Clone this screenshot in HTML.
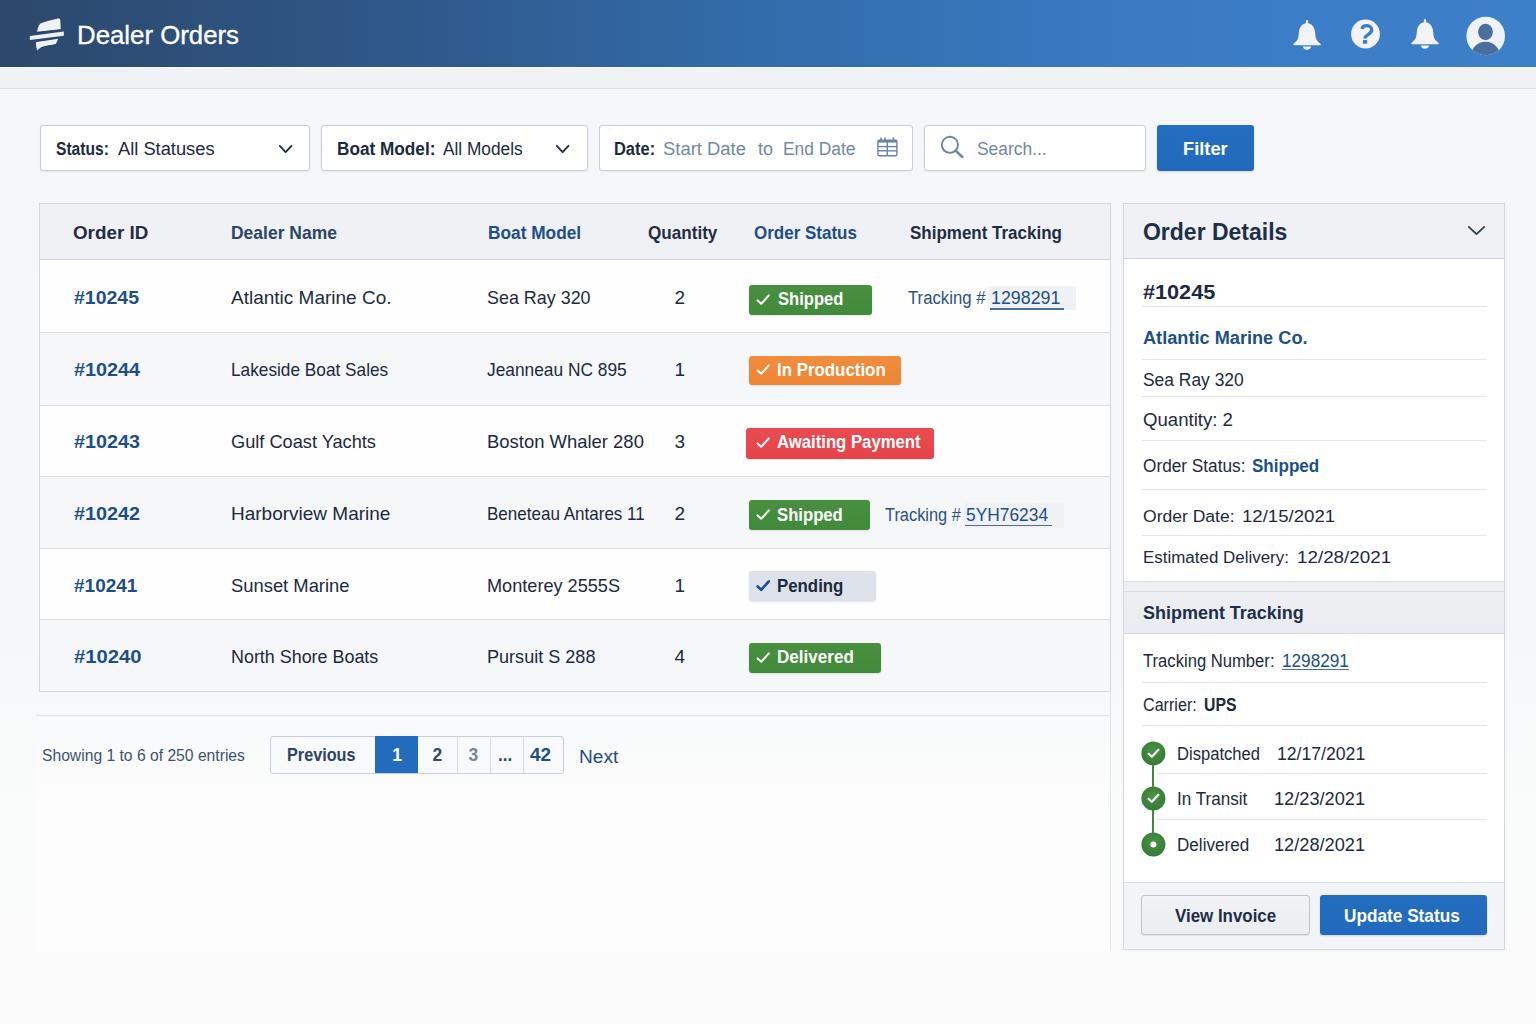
<!DOCTYPE html>
<html><head><meta charset="utf-8">
<style>
*{box-sizing:border-box;margin:0;padding:0}
html,body{width:1536px;height:1024px;overflow:hidden}
body{font-family:"Liberation Sans",sans-serif;background:linear-gradient(180deg,#f5f6f8 0%,#f6f7f8 62%,#fafbfb 80%,#fbfbfc 100%);position:relative}
.abs{position:absolute}
.t{position:absolute;white-space:nowrap}
.hdr{left:0;top:0;width:1536px;height:67px;background:linear-gradient(90deg,#2c486b 0%,#2f5788 25%,#326dab 50%,#3a7bc4 75%,#3d80ca 100%)}
.band{left:0;top:67px;width:1536px;height:22px;background:linear-gradient(180deg,#f1f2f5,#eff1f3);border-top:1px solid #fbfcfd;border-bottom:1px solid #d9dce2}
.box{background:#fff;border:1px solid #c6cdd8;border-radius:3px;height:46px;top:124.5px;box-shadow:0 1px 2px rgba(30,50,80,.06)}
.tbl{left:39px;top:203px;width:1072px;height:489px;border:1px solid #d3d8df;background:#fff}
.panel{left:1123px;top:203px;width:382px;height:747px;border:1px solid #d3d8df;background:#fff;box-shadow:0 1px 3px rgba(30,50,80,.05)}
</style></head><body>
<div class="abs hdr"></div>
<div class="abs band"></div>
<svg class="abs" style="left:24px;top:12px" width="50" height="44" viewBox="24 12 50 44">
<g fill="#eef1f6" stroke="#1a3559" stroke-width="0.8" stroke-linejoin="round">
<path d="M36.5 32.3 C37.5 27 38.5 24 41 22.8 C46 20.6 53 19.5 57.6 18.1 C59.6 17.6 60.7 18.6 60.8 20.2 L61.2 29.6 Z"/>
<path stroke="none" d="M29.8 36 L63.8 31.6 L63.8 35.8 L29.8 40 Z"/>
<path d="M35.6 41.7 L58.9 38.2 C57.8 41 56.8 43.6 55.4 44.6 C50 45.8 44 46.2 41.2 47.7 C39.5 48.8 38.3 50 37.3 50.8 C36 49 35.4 46.4 35.6 41.7 Z"/>
</g></svg>
<div class="t" style="left:77.00px;top:21.60px;font-size:26px;line-height:26px;font-weight:normal;color:#ffffff;transform:scaleX(0.9920);transform-origin:0 0;-webkit-text-stroke:0.35px #fff;">Dealer Orders</div>
<svg class="abs" style="left:1291px;top:19.5px" width="32" height="34" viewBox="-16 0 32 34">
<path fill="#f1f3f7" d="M-1.1 0.5 Q0 -0.3 1.1 0.5 L1.1 3.2 C6 4.2 7.7 8 8.2 13 C8.6 18 9 20.5 13.2 23.4 C14.3 24.2 14 25.3 12.8 25.3 L-12.8 25.3 C-14 25.3 -14.3 24.2 -13.2 23.4 C-9 20.5 -8.6 18 -8.2 13 C-7.7 8 -6 4.2 -1.1 3.2 Z"/>
<path fill="#f1f3f7" d="M-4.2 26.5 L4.2 26.5 C3.6 28.6 2 29.8 0 29.8 C-2 29.8 -3.6 28.6 -4.2 26.5 Z"/>
</svg>
<svg class="abs" style="left:1408.8px;top:18.5px" width="32" height="34" viewBox="-16 0 32 34">
<path fill="#f1f3f7" d="M-1.1 0.5 Q0 -0.3 1.1 0.5 L1.1 3.2 C6 4.2 7.7 8 8.2 13 C8.6 18 9 20.5 13.2 23.4 C14.3 24.2 14 25.3 12.8 25.3 L-12.8 25.3 C-14 25.3 -14.3 24.2 -13.2 23.4 C-9 20.5 -8.6 18 -8.2 13 C-7.7 8 -6 4.2 -1.1 3.2 Z"/>
<path fill="#f1f3f7" d="M-4.2 26.5 L4.2 26.5 C3.6 28.6 2 29.8 0 29.8 C-2 29.8 -3.6 28.6 -4.2 26.5 Z"/>
</svg>
<svg class="abs" style="left:1350px;top:19px" width="31" height="31" viewBox="0 0 31 31">
<circle cx="15.5" cy="15" r="14.4" fill="#f1f3f7"/>
<path d="M12 10 C12.3 7.4 14.4 6.6 16.8 6.6 C19.7 6.6 21.7 8.5 21.7 11.1 C21.7 13.7 19.6 14.8 17.4 16.1 C15.7 17.1 14.9 17.9 14.9 19.4" fill="none" stroke="#3b7cc8" stroke-width="3.3"/>
<rect x="12.9" y="21.1" width="4.3" height="3.6" fill="#3b7cc8"/>
</svg>
<svg class="abs" style="left:1466px;top:16px" width="40" height="40" viewBox="0 0 40 40">
<defs><clipPath id="avc"><circle cx="19.7" cy="20" r="19.3"/></clipPath></defs>
<circle cx="19.7" cy="20" r="19.3" fill="#eef1f6"/>
<g clip-path="url(#avc)" fill="#4a6f9e">
<ellipse cx="19.5" cy="15.9" rx="7.4" ry="8.1"/>
<ellipse cx="19.5" cy="40" rx="14.6" ry="14.2"/>
</g>
</svg>
<div class="abs box" style="left:40px;width:270px"></div>
<div class="t" style="left:55.50px;top:139.70px;font-size:18px;line-height:18px;font-weight:bold;color:#1b2a41;transform:scaleX(0.8672);transform-origin:0 0;">Status:</div>
<div class="t" style="left:117.50px;top:139.70px;font-size:18px;line-height:18px;font-weight:normal;color:#1b2a41;transform:scaleX(1.0158);transform-origin:0 0;">All Statuses</div>
<svg class="abs" style="left:277px;top:143px" width="17.30000000000001" height="12" viewBox="277 143 17.30000000000001 12"><path d="M279.8 145.8 L285.65 152.2 L291.5 145.8" fill="none" stroke="#1e2c45" stroke-width="1.8" stroke-linecap="round" stroke-linejoin="round"/></svg>
<div class="abs box" style="left:321px;width:267px"></div>
<div class="t" style="left:336.80px;top:139.70px;font-size:18px;line-height:18px;font-weight:bold;color:#1b2a41;transform:scaleX(0.9553);transform-origin:0 0;">Boat Model:</div>
<div class="t" style="left:443.00px;top:139.70px;font-size:18px;line-height:18px;font-weight:normal;color:#1b2a41;transform:scaleX(0.9590);transform-origin:0 0;">All Models</div>
<svg class="abs" style="left:554px;top:143px" width="17.299999999999955" height="12" viewBox="554 143 17.299999999999955 12"><path d="M556.8 145.8 L562.65 152.2 L568.5 145.8" fill="none" stroke="#1e2c45" stroke-width="1.8" stroke-linecap="round" stroke-linejoin="round"/></svg>
<div class="abs box" style="left:599px;width:314px"></div>
<div class="t" style="left:613.60px;top:139.70px;font-size:18px;line-height:18px;font-weight:bold;color:#1b2a41;transform:scaleX(0.9133);transform-origin:0 0;">Date:</div>
<div class="t" style="left:662.60px;top:139.70px;font-size:18px;line-height:18px;font-weight:normal;color:#7488a3;transform:scaleX(1.0235);transform-origin:0 0;">Start Date</div>
<div class="t" style="left:758.00px;top:139.70px;font-size:18px;line-height:18px;font-weight:normal;color:#7488a3;">to</div>
<div class="t" style="left:783.40px;top:139.70px;font-size:18px;line-height:18px;font-weight:normal;color:#7488a3;transform:scaleX(0.9667);transform-origin:0 0;">End Date</div>
<svg class="abs" style="left:870px;top:132px" width="36" height="30" viewBox="870 132 36 30">
<g fill="none" stroke="#6a84a6" stroke-width="1.4">
<rect x="877.9" y="140.2" width="19" height="15.6" rx="1.2"/>
<line x1="877.9" y1="146.6" x2="896.9" y2="146.6"/><line x1="877.9" y1="150.8" x2="896.9" y2="150.8"/>
<line x1="887.3" y1="142" x2="887.3" y2="155.8"/>
</g>
<rect x="877.9" y="140" width="19" height="2.6" fill="#6a84a6"/>
<g stroke="#6a84a6" stroke-width="1.6"><line x1="881" y1="137.6" x2="881" y2="140.5"/><line x1="885" y1="137.6" x2="885" y2="140.5"/><line x1="893.4" y1="137.6" x2="893.4" y2="140.5"/></g>
</svg>
<div class="abs box" style="left:924px;width:222px"></div>
<svg class="abs" style="left:934px;top:130px" width="36" height="34" viewBox="934 130 36 34">
<circle cx="949.9" cy="144.8" r="8.1" fill="none" stroke="#6f84a0" stroke-width="1.9"/>
<line x1="955.6" y1="150.6" x2="962.3" y2="156.9" stroke="#6f84a0" stroke-width="2.6" stroke-linecap="round"/>
</svg>
<div class="t" style="left:977.00px;top:139.70px;font-size:18px;line-height:18px;font-weight:normal;color:#7488a3;transform:scaleX(0.9667);transform-origin:0 0;">Search...</div>
<div class="abs" style="left:1157px;top:125px;width:97px;height:46px;background:linear-gradient(180deg,#236ec0,#2169bb);border-radius:3px;box-shadow:0 1px 2px rgba(0,0,0,.15)"></div>
<div class="t" style="left:1183.00px;top:140.00px;font-size:18px;line-height:18px;font-weight:bold;color:#ffffff;transform:scaleX(1.0159);transform-origin:0 0;">Filter</div>
<div class="abs" style="left:1110px;top:203px;width:1px;height:748px;background:#e3e6eb"></div>
<div class="abs tbl"></div>
<div class="abs" style="left:40px;top:204px;width:1070px;height:55px;background:linear-gradient(180deg,#f0f1f4,#eef0f3)"></div>
<div class="abs" style="left:40px;top:259px;width:1070px;height:1px;background:#cdd3dc"></div>
<div class="abs" style="left:40px;top:260px;width:1070px;height:72px;background:#fefefe"></div>
<div class="abs" style="left:40px;top:332px;width:1070px;height:1px;background:#d9dde4"></div>
<div class="abs" style="left:40px;top:333px;width:1070px;height:72px;background:#f6f7f9"></div>
<div class="abs" style="left:40px;top:405px;width:1070px;height:1px;background:#d9dde4"></div>
<div class="abs" style="left:40px;top:406px;width:1070px;height:70px;background:#fefefe"></div>
<div class="abs" style="left:40px;top:476px;width:1070px;height:1px;background:#d9dde4"></div>
<div class="abs" style="left:40px;top:477px;width:1070px;height:71px;background:#f6f7f9"></div>
<div class="abs" style="left:40px;top:548px;width:1070px;height:1px;background:#d9dde4"></div>
<div class="abs" style="left:40px;top:549px;width:1070px;height:70px;background:#fefefe"></div>
<div class="abs" style="left:40px;top:619px;width:1070px;height:1px;background:#d9dde4"></div>
<div class="abs" style="left:40px;top:620px;width:1070px;height:71px;background:#f6f7f9"></div>
<div class="t" style="left:72.70px;top:223.50px;font-size:18.5px;line-height:18.5px;font-weight:bold;color:#1e2d45;transform:scaleX(1.0162);transform-origin:0 0;">Order ID</div>
<div class="t" style="left:230.50px;top:223.50px;font-size:18.5px;line-height:18.5px;font-weight:bold;color:#2c4566;transform:scaleX(0.9447);transform-origin:0 0;">Dealer Name</div>
<div class="t" style="left:487.60px;top:223.50px;font-size:18.5px;line-height:18.5px;font-weight:bold;color:#1c4f8a;transform:scaleX(0.9338);transform-origin:0 0;">Boat Model</div>
<div class="t" style="left:647.70px;top:223.50px;font-size:18.5px;line-height:18.5px;font-weight:bold;color:#1e2d45;transform:scaleX(0.9240);transform-origin:0 0;">Quantity</div>
<div class="t" style="left:753.60px;top:223.50px;font-size:18.5px;line-height:18.5px;font-weight:bold;color:#1c4f8a;transform:scaleX(0.9179);transform-origin:0 0;">Order Status</div>
<div class="t" style="left:909.90px;top:223.50px;font-size:18.5px;line-height:18.5px;font-weight:bold;color:#1e2d45;transform:scaleX(0.9178);transform-origin:0 0;">Shipment Tracking</div>
<div class="t" style="left:74.00px;top:288.00px;font-size:19px;line-height:19px;font-weight:bold;color:#1c4f8a;transform:scaleX(1.0252);transform-origin:0 0;">#10245</div>
<div class="t" style="left:231.00px;top:288.00px;font-size:19px;line-height:19px;font-weight:normal;color:#1b2a41;">Atlantic Marine Co.</div>
<div class="t" style="left:487.00px;top:288.00px;font-size:19px;line-height:19px;font-weight:normal;color:#1b2a41;transform:scaleX(0.9427);transform-origin:0 0;">Sea Ray 320</div>
<div class="t" style="left:674.50px;top:288.00px;font-size:19px;line-height:19px;font-weight:normal;color:#1b2a41;">2</div>
<div class="t" style="left:74.00px;top:360.00px;font-size:19px;line-height:19px;font-weight:bold;color:#1c4f8a;transform:scaleX(1.0426);transform-origin:0 0;">#10244</div>
<div class="t" style="left:231.00px;top:360.00px;font-size:19px;line-height:19px;font-weight:normal;color:#1b2a41;transform:scaleX(0.9076);transform-origin:0 0;">Lakeside Boat Sales</div>
<div class="t" style="left:487.00px;top:360.00px;font-size:19px;line-height:19px;font-weight:normal;color:#1b2a41;transform:scaleX(0.9119);transform-origin:0 0;">Jeanneau NC 895</div>
<div class="t" style="left:674.50px;top:360.00px;font-size:19px;line-height:19px;font-weight:normal;color:#1b2a41;">1</div>
<div class="t" style="left:74.00px;top:432.30px;font-size:19px;line-height:19px;font-weight:bold;color:#1c4f8a;transform:scaleX(1.0410);transform-origin:0 0;">#10243</div>
<div class="t" style="left:231.00px;top:432.30px;font-size:19px;line-height:19px;font-weight:normal;color:#1b2a41;transform:scaleX(0.9577);transform-origin:0 0;">Gulf Coast Yachts</div>
<div class="t" style="left:487.00px;top:432.30px;font-size:19px;line-height:19px;font-weight:normal;color:#1b2a41;transform:scaleX(0.9709);transform-origin:0 0;">Boston Whaler 280</div>
<div class="t" style="left:674.50px;top:432.30px;font-size:19px;line-height:19px;font-weight:normal;color:#1b2a41;">3</div>
<div class="t" style="left:74.00px;top:504.20px;font-size:19px;line-height:19px;font-weight:bold;color:#1c4f8a;transform:scaleX(1.0410);transform-origin:0 0;">#10242</div>
<div class="t" style="left:231.00px;top:504.20px;font-size:19px;line-height:19px;font-weight:normal;color:#1b2a41;">Harborview Marine</div>
<div class="t" style="left:487.00px;top:504.20px;font-size:19px;line-height:19px;font-weight:normal;color:#1b2a41;transform:scaleX(0.8961);transform-origin:0 0;">Beneteau Antares 11</div>
<div class="t" style="left:674.50px;top:504.20px;font-size:19px;line-height:19px;font-weight:normal;color:#1b2a41;">2</div>
<div class="t" style="left:74.00px;top:575.80px;font-size:19px;line-height:19px;font-weight:bold;color:#1c4f8a;">#10241</div>
<div class="t" style="left:231.00px;top:575.80px;font-size:19px;line-height:19px;font-weight:normal;color:#1b2a41;transform:scaleX(0.9673);transform-origin:0 0;">Sunset Marine</div>
<div class="t" style="left:487.00px;top:575.80px;font-size:19px;line-height:19px;font-weight:normal;color:#1b2a41;transform:scaleX(0.9541);transform-origin:0 0;">Monterey 2555S</div>
<div class="t" style="left:674.50px;top:575.80px;font-size:19px;line-height:19px;font-weight:normal;color:#1b2a41;">1</div>
<div class="t" style="left:74.00px;top:647.40px;font-size:19px;line-height:19px;font-weight:bold;color:#1c4f8a;transform:scaleX(1.0647);transform-origin:0 0;">#10240</div>
<div class="t" style="left:231.00px;top:647.40px;font-size:19px;line-height:19px;font-weight:normal;color:#1b2a41;transform:scaleX(0.9424);transform-origin:0 0;">North Shore Boats</div>
<div class="t" style="left:487.00px;top:647.40px;font-size:19px;line-height:19px;font-weight:normal;color:#1b2a41;transform:scaleX(0.9509);transform-origin:0 0;">Pursuit S 288</div>
<div class="t" style="left:674.50px;top:647.40px;font-size:19px;line-height:19px;font-weight:normal;color:#1b2a41;">4</div>
<div class="abs" style="left:749px;top:284.5px;width:122.5px;height:30.0px;background:linear-gradient(180deg,#48903f,#418a3b);border-radius:3px;box-shadow:0 1px 2px rgba(0,0,0,.10)"></div>
<svg class="abs" style="left:755px;top:291.5px" width="18" height="16" viewBox="0 0 18 16"><path d="M2.6 8.4 L6.2 11.8 L13.8 3.4" fill="none" stroke="#ffffff" stroke-width="2" stroke-linecap="round" stroke-linejoin="round"/></svg>
<div class="t" style="left:777.60px;top:290.00px;font-size:18px;line-height:18px;font-weight:bold;color:#ffffff;transform:scaleX(0.9211);transform-origin:0 0;">Shipped</div>
<div class="abs" style="left:749px;top:355.5px;width:151.5px;height:29.0px;background:linear-gradient(180deg,#f08d3c,#ec8534);border-radius:3px;box-shadow:0 1px 2px rgba(0,0,0,.10)"></div>
<svg class="abs" style="left:755px;top:362.0px" width="18" height="16" viewBox="0 0 18 16"><path d="M2.6 8.4 L6.2 11.8 L13.8 3.4" fill="none" stroke="#ffffff" stroke-width="2" stroke-linecap="round" stroke-linejoin="round"/></svg>
<div class="t" style="left:776.50px;top:360.50px;font-size:18px;line-height:18px;font-weight:bold;color:#ffffff;transform:scaleX(0.9371);transform-origin:0 0;">In Production</div>
<div class="abs" style="left:746px;top:427.5px;width:188px;height:31.0px;background:linear-gradient(180deg,#ea4b50,#e5454a);border-radius:3px;box-shadow:0 1px 2px rgba(0,0,0,.10)"></div>
<svg class="abs" style="left:755px;top:435.0px" width="18" height="16" viewBox="0 0 18 16"><path d="M2.6 8.4 L6.2 11.8 L13.8 3.4" fill="none" stroke="#ffffff" stroke-width="2" stroke-linecap="round" stroke-linejoin="round"/></svg>
<div class="t" style="left:776.70px;top:433.30px;font-size:18px;line-height:18px;font-weight:bold;color:#ffffff;transform:scaleX(0.9282);transform-origin:0 0;">Awaiting Payment</div>
<div class="abs" style="left:748.5px;top:500px;width:121.5px;height:30.299999999999955px;background:linear-gradient(180deg,#48903f,#418a3b);border-radius:3px;box-shadow:0 1px 2px rgba(0,0,0,.10)"></div>
<svg class="abs" style="left:755px;top:507.15px" width="18" height="16" viewBox="0 0 18 16"><path d="M2.6 8.4 L6.2 11.8 L13.8 3.4" fill="none" stroke="#ffffff" stroke-width="2" stroke-linecap="round" stroke-linejoin="round"/></svg>
<div class="t" style="left:777.20px;top:506.00px;font-size:18px;line-height:18px;font-weight:bold;color:#ffffff;transform:scaleX(0.9268);transform-origin:0 0;">Shipped</div>
<div class="abs" style="left:748.5px;top:570.8px;width:127.5px;height:29.90000000000009px;background:#dde2ea;border-radius:3px;box-shadow:0 1px 2px rgba(0,0,0,.10)"></div>
<svg class="abs" style="left:755px;top:577.75px" width="18" height="16" viewBox="0 0 18 16"><path d="M2.6 8.4 L6.2 11.8 L13.8 3.4" fill="none" stroke="#1e4f8f" stroke-width="2.7" stroke-linecap="round" stroke-linejoin="round"/></svg>
<div class="t" style="left:777.20px;top:576.80px;font-size:18px;line-height:18px;font-weight:bold;color:#1b2a41;transform:scaleX(0.9352);transform-origin:0 0;">Pending</div>
<div class="abs" style="left:748.5px;top:642.7px;width:132.5px;height:29.899999999999977px;background:linear-gradient(180deg,#48903f,#418a3b);border-radius:3px;box-shadow:0 1px 2px rgba(0,0,0,.10)"></div>
<svg class="abs" style="left:755px;top:649.6500000000001px" width="18" height="16" viewBox="0 0 18 16"><path d="M2.6 8.4 L6.2 11.8 L13.8 3.4" fill="none" stroke="#ffffff" stroke-width="2" stroke-linecap="round" stroke-linejoin="round"/></svg>
<div class="t" style="left:776.50px;top:648.30px;font-size:18px;line-height:18px;font-weight:bold;color:#ffffff;transform:scaleX(0.9481);transform-origin:0 0;">Delivered</div>
<div class="abs" style="left:988px;top:286px;width:88px;height:24px;background:#eff1f4;border-radius:2px"></div>
<div class="t" style="left:907.50px;top:289.20px;font-size:18px;line-height:18px;font-weight:normal;color:#2a5285;transform:scaleX(0.9293);transform-origin:0 0;">Tracking #</div>
<div class="t" style="left:990.60px;top:289.20px;font-size:18px;line-height:18px;font-weight:normal;color:#1c4f8a;transform:scaleX(0.9900);transform-origin:0 0;">1298291</div>
<div class="abs" style="left:990px;top:308.3px;width:74px;height:1.3px;background:#4b6f9c"></div>
<div class="abs" style="left:964px;top:503px;width:99.6px;height:24.6px;background:#eff1f4;border-radius:2px"></div>
<div class="t" style="left:885.00px;top:506.00px;font-size:18px;line-height:18px;font-weight:normal;color:#2a5285;transform:scaleX(0.9101);transform-origin:0 0;">Tracking #</div>
<div class="t" style="left:966.20px;top:506.00px;font-size:18px;line-height:18px;font-weight:normal;color:#1c4f8a;transform:scaleX(0.9647);transform-origin:0 0;">5YH76234</div>
<div class="abs" style="left:965.3px;top:524.8px;width:87.2px;height:1.3px;background:#4b6f9c"></div>
<div class="abs" style="left:36px;top:716px;width:1074px;height:235px;background:linear-gradient(180deg,#f8f9fa,#fdfdfd 45%,#fdfdfd);"></div>
<div class="abs" style="left:36px;top:715px;width:1074px;height:1px;background:#dde1e7"></div>
<div class="t" style="left:41.70px;top:747.00px;font-size:16.3px;line-height:16.3px;font-weight:normal;color:#3d5370;transform:scaleX(0.9621);transform-origin:0 0;">Showing 1 to 6 of 250 entries</div>
<div class="abs" style="left:269.5px;top:735.5px;width:294.5px;height:38px;background:#f8f9fb;border:1px solid #c9d0da;border-radius:3px"></div>
<div class="abs" style="left:375px;top:736px;width:43.3px;height:37px;background:#226bbd"></div>
<div class="abs" style="left:456.7px;top:736px;width:1px;height:37px;background:#d6dbe2"></div>
<div class="abs" style="left:489.6px;top:736px;width:1px;height:37px;background:#d6dbe2"></div>
<div class="abs" style="left:522.7px;top:736px;width:1px;height:37px;background:#d6dbe2"></div>
<div class="t" style="left:286.70px;top:747.00px;font-size:17.5px;line-height:17.5px;font-weight:bold;color:#2c4566;transform:scaleX(0.9269);transform-origin:0 0;">Previous</div>
<div class="t" style="left:392.30px;top:747.00px;font-size:17.5px;line-height:17.5px;font-weight:bold;color:#ffffff;">1</div>
<div class="t" style="left:432.40px;top:747.00px;font-size:17.5px;line-height:17.5px;font-weight:bold;color:#3a4a60;">2</div>
<div class="t" style="left:468.60px;top:747.00px;font-size:17.5px;line-height:17.5px;font-weight:bold;color:#7b8798;">3</div>
<div class="t" style="left:497.50px;top:747.00px;font-size:17.5px;line-height:17.5px;font-weight:bold;color:#2c4566;transform:scaleX(0.9658);transform-origin:0 0;">...</div>
<div class="t" style="left:529.70px;top:747.00px;font-size:17.5px;line-height:17.5px;font-weight:bold;color:#1c4f8a;transform:scaleX(1.0769);transform-origin:0 0;">42</div>
<div class="t" style="left:579.00px;top:747.60px;font-size:18px;line-height:18px;font-weight:normal;color:#1f4d85;transform:scaleX(1.0595);transform-origin:0 0;">Next</div>
<div class="abs panel"></div>
<div class="abs" style="left:1124px;top:204px;width:380px;height:54px;background:linear-gradient(180deg,#f0f1f4,#eef0f3)"></div>
<div class="abs" style="left:1124px;top:258px;width:380px;height:1px;background:#cdd3dc"></div>
<div class="t" style="left:1143.10px;top:220.80px;font-size:23.3px;line-height:23.3px;font-weight:bold;color:#1e2f4a;transform:scaleX(0.9863);transform-origin:0 0;">Order Details</div>
<svg class="abs" style="left:1466px;top:224px" width="21" height="13" viewBox="1466 224 21 13"><path d="M1468.8 226.8 L1476.5 234.2 L1484.2 226.8" fill="none" stroke="#2a3a52" stroke-width="1.7" stroke-linecap="round" stroke-linejoin="round"/></svg>
<div class="t" style="left:1143.00px;top:282.60px;font-size:19.3px;line-height:19.3px;font-weight:bold;color:#1b2a41;transform:scaleX(1.1227);transform-origin:0 0;">#10245</div>
<div class="abs" style="left:1142.3px;top:306px;width:344.70000000000005px;height:1px;background:#e3e7ec"></div>
<div class="t" style="left:1142.50px;top:329.20px;font-size:18px;line-height:18px;font-weight:bold;color:#1c4f8a;transform:scaleX(1.0092);transform-origin:0 0;">Atlantic Marine Co.</div>
<div class="abs" style="left:1142.3px;top:358.5px;width:344.70000000000005px;height:1px;background:#e3e7ec"></div>
<div class="t" style="left:1142.50px;top:372.00px;font-size:17.5px;line-height:17.5px;font-weight:normal;color:#1b2a41;transform:scaleX(0.9951);transform-origin:0 0;">Sea Ray 320</div>
<div class="abs" style="left:1142.3px;top:396px;width:344.70000000000005px;height:1px;background:#e3e7ec"></div>
<div class="t" style="left:1142.50px;top:411.60px;font-size:17.5px;line-height:17.5px;font-weight:normal;color:#1b2a41;transform:scaleX(1.0626);transform-origin:0 0;">Quantity: 2</div>
<div class="abs" style="left:1142.3px;top:439.5px;width:344.70000000000005px;height:1px;background:#e3e7ec"></div>
<div class="t" style="left:1142.50px;top:458.00px;font-size:17.5px;line-height:17.5px;font-weight:normal;color:#1b2a41;transform:scaleX(0.9846);transform-origin:0 0;">Order Status:</div>
<div class="t" style="left:1252.40px;top:458.00px;font-size:17.5px;line-height:17.5px;font-weight:bold;color:#1c4f8a;transform:scaleX(0.9739);transform-origin:0 0;">Shipped</div>
<div class="abs" style="left:1142.3px;top:488.5px;width:344.70000000000005px;height:1px;background:#e3e7ec"></div>
<div class="t" style="left:1143.10px;top:507.80px;font-size:17.3px;line-height:17.3px;font-weight:normal;color:#1b2a41;transform:scaleX(1.0144);transform-origin:0 0;">Order Date:</div>
<div class="t" style="left:1241.80px;top:507.80px;font-size:17.3px;line-height:17.3px;font-weight:normal;color:#1b2a41;transform:scaleX(1.0762);transform-origin:0 0;">12/15/2021</div>
<div class="abs" style="left:1142.3px;top:535.2px;width:344.70000000000005px;height:1px;background:#e3e7ec"></div>
<div class="t" style="left:1143.00px;top:548.60px;font-size:17.3px;line-height:17.3px;font-weight:normal;color:#1b2a41;transform:scaleX(0.9799);transform-origin:0 0;">Estimated Delivery:</div>
<div class="t" style="left:1297.30px;top:548.60px;font-size:17.3px;line-height:17.3px;font-weight:normal;color:#1b2a41;transform:scaleX(1.0889);transform-origin:0 0;">12/28/2021</div>
<div class="abs" style="left:1124px;top:580.5px;width:380px;height:1px;background:#d7dce3"></div>
<div class="abs" style="left:1124px;top:581.5px;width:380px;height:10px;background:#eef0f3"></div>
<div class="abs" style="left:1124px;top:591px;width:380px;height:1px;background:#d7dce3"></div>
<div class="abs" style="left:1124px;top:592px;width:380px;height:41px;background:linear-gradient(180deg,#edeff2,#e9ecf0)"></div>
<div class="abs" style="left:1124px;top:633px;width:380px;height:1px;background:#d3d8df"></div>
<div class="t" style="left:1143.00px;top:605.00px;font-size:17.5px;line-height:17.5px;font-weight:bold;color:#1e2f4a;transform:scaleX(1.0268);transform-origin:0 0;">Shipment Tracking</div>
<div class="t" style="left:1142.50px;top:653.10px;font-size:17.5px;line-height:17.5px;font-weight:normal;color:#1b2a41;transform:scaleX(0.9501);transform-origin:0 0;">Tracking Number:</div>
<div class="t" style="left:1281.80px;top:653.10px;font-size:17.5px;line-height:17.5px;font-weight:normal;color:#1c4f8a;transform:scaleX(0.9824);transform-origin:0 0;">1298291</div>
<div class="abs" style="left:1281.5px;top:669.1px;width:67.5px;height:1.3px;background:#3c6fb0"></div>
<div class="abs" style="left:1142.3px;top:682px;width:344.70000000000005px;height:1px;background:#e3e7ec"></div>
<div class="t" style="left:1142.50px;top:697.00px;font-size:17.5px;line-height:17.5px;font-weight:normal;color:#1b2a41;transform:scaleX(0.9211);transform-origin:0 0;">Carrier:</div>
<div class="t" style="left:1203.50px;top:697.00px;font-size:17.5px;line-height:17.5px;font-weight:bold;color:#1b2a41;transform:scaleX(0.9028);transform-origin:0 0;">UPS</div>
<div class="abs" style="left:1142.3px;top:724.5px;width:344.70000000000005px;height:1px;background:#e3e7ec"></div>
<div class="abs" style="left:1152.3px;top:760px;width:2.2px;height:80px;background:#3f8a3c"></div>
<svg class="abs" style="left:1140px;top:739.7px" width="27" height="27" viewBox="0 0 27 27"><defs><radialGradient id="g753" cx="0.5" cy="0.4" r="0.6"><stop offset="0" stop-color="#4a9446"/><stop offset="1" stop-color="#357a33"/></radialGradient></defs><circle cx="13.4" cy="13.5" r="12" fill="url(#g753)"/><path d="M8.6 13.8 L11.8 16.8 L18.4 9.8" fill="none" stroke="#fff" stroke-width="2.2" stroke-linecap="round" stroke-linejoin="round"/></svg>
<svg class="abs" style="left:1140px;top:785.0px" width="27" height="27" viewBox="0 0 27 27"><defs><radialGradient id="g798" cx="0.5" cy="0.4" r="0.6"><stop offset="0" stop-color="#4a9446"/><stop offset="1" stop-color="#357a33"/></radialGradient></defs><circle cx="13.4" cy="13.5" r="12" fill="url(#g798)"/><path d="M8.6 13.8 L11.8 16.8 L18.4 9.8" fill="none" stroke="#fff" stroke-width="2.2" stroke-linecap="round" stroke-linejoin="round"/></svg>
<svg class="abs" style="left:1140px;top:830.5px" width="27" height="27" viewBox="0 0 27 27"><defs><radialGradient id="g844" cx="0.5" cy="0.4" r="0.6"><stop offset="0" stop-color="#4a9446"/><stop offset="1" stop-color="#357a33"/></radialGradient></defs><circle cx="13.4" cy="13.5" r="12" fill="url(#g844)"/><circle cx="13.4" cy="13.5" r="3" fill="#fff"/></svg>
<div class="t" style="left:1177.00px;top:745.70px;font-size:17.5px;line-height:17.5px;font-weight:normal;color:#1b2a41;transform:scaleX(0.9475);transform-origin:0 0;">Dispatched</div>
<div class="t" style="left:1277.40px;top:745.70px;font-size:17.5px;line-height:17.5px;font-weight:normal;color:#1b2a41;transform:scaleX(1.0068);transform-origin:0 0;">12/17/2021</div>
<div class="abs" style="left:1156.5px;top:772.5px;width:330.5px;height:1px;background:#e3e7ec"></div>
<div class="t" style="left:1177.00px;top:791.20px;font-size:17.5px;line-height:17.5px;font-weight:normal;color:#1b2a41;transform:scaleX(0.9764);transform-origin:0 0;">In Transit</div>
<div class="t" style="left:1273.80px;top:791.20px;font-size:17.5px;line-height:17.5px;font-weight:normal;color:#1b2a41;transform:scaleX(1.0400);transform-origin:0 0;">12/23/2021</div>
<div class="abs" style="left:1156.5px;top:819px;width:330.5px;height:1px;background:#e3e7ec"></div>
<div class="t" style="left:1177.00px;top:836.50px;font-size:17.5px;line-height:17.5px;font-weight:normal;color:#1b2a41;transform:scaleX(0.9770);transform-origin:0 0;">Delivered</div>
<div class="t" style="left:1273.80px;top:836.50px;font-size:17.5px;line-height:17.5px;font-weight:normal;color:#1b2a41;transform:scaleX(1.0400);transform-origin:0 0;">12/28/2021</div>
<div class="abs" style="left:1124px;top:882px;width:380px;height:67px;background:#f3f4f7;border-top:1px solid #d9dde3"></div>
<div class="abs" style="left:1141px;top:895.3px;width:168.5px;height:39.5px;background:linear-gradient(180deg,#f1f3f6,#eaedf1);border:1px solid #bcc4cf;border-radius:3px;box-shadow:0 1px 1px rgba(0,0,0,.08)"></div>
<div class="t" style="left:1175.40px;top:907.60px;font-size:17.5px;line-height:17.5px;font-weight:bold;color:#1e2d45;transform:scaleX(0.9656);transform-origin:0 0;">View Invoice</div>
<div class="abs" style="left:1320.2px;top:895.3px;width:166.4px;height:39.7px;background:linear-gradient(180deg,#236ec0,#2169bb);border-radius:3px;box-shadow:0 1px 2px rgba(0,0,0,.15)"></div>
<div class="t" style="left:1344.20px;top:907.60px;font-size:17.5px;line-height:17.5px;font-weight:bold;color:#ffffff;transform:scaleX(0.9839);transform-origin:0 0;">Update Status</div>
</body></html>
